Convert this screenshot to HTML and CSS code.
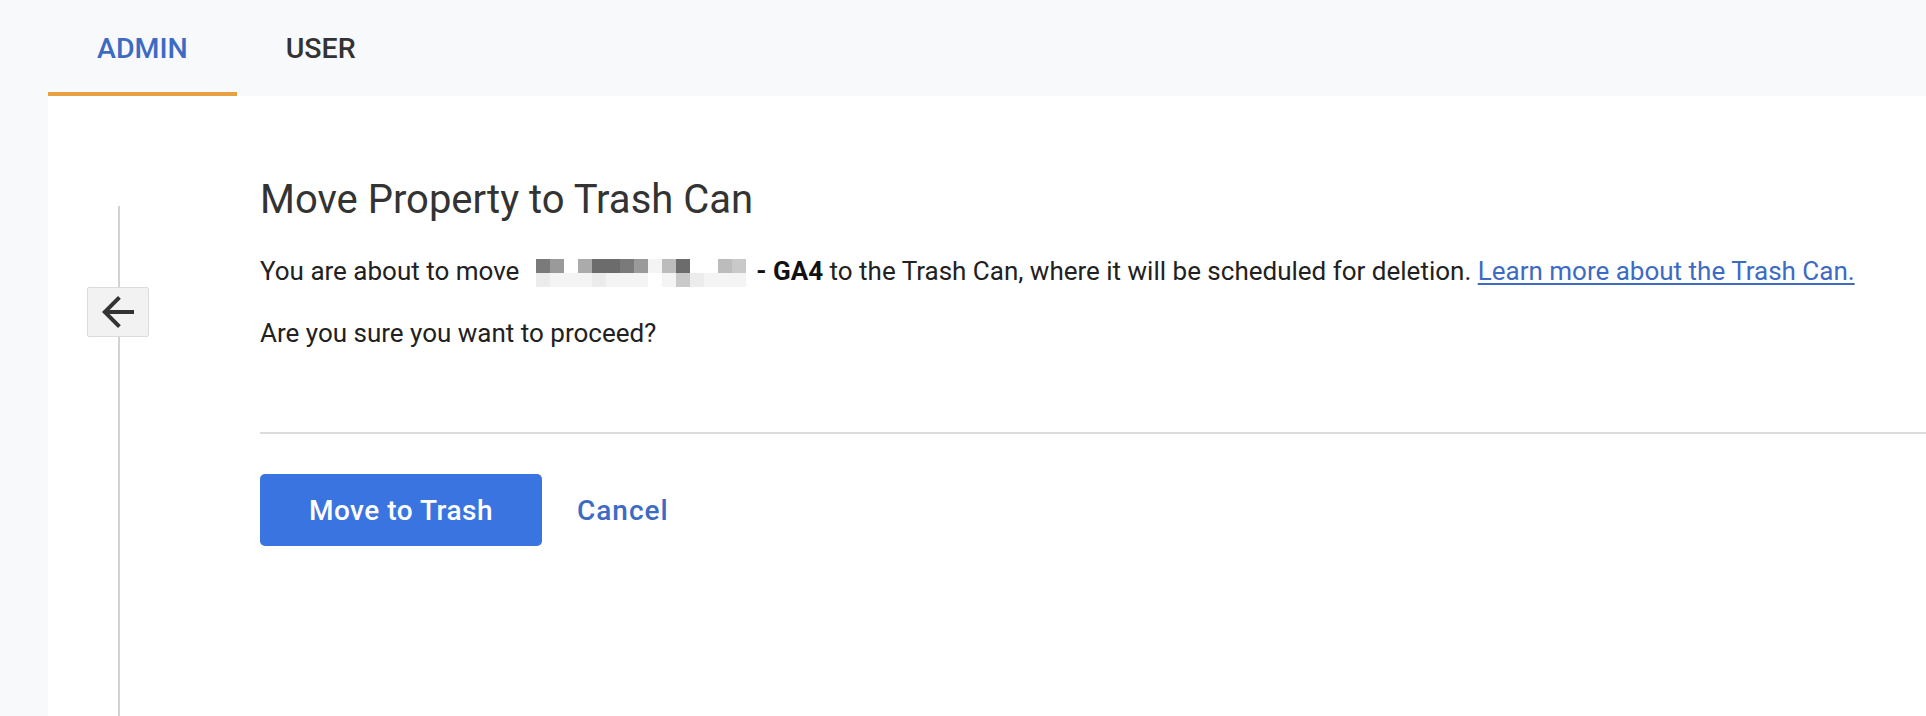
FILE: index.html
```html
<!DOCTYPE html>
<html lang="en">
<head>
<meta charset="utf-8">
<title>Move Property to Trash Can</title>
<link rel="stylesheet" href="styles.css">
</head>
<body>
<div class="page">
  <nav class="tabs">
    <div class="tab tab-active">ADMIN</div>
    <div class="tab">USER</div>
  </nav>
  <main class="panel">
    <div class="rail">
      <div class="rail-line rail-line-top"></div>
      <button class="back-btn" aria-label="Back">
        <svg viewBox="0 0 24 24" width="48" height="48"><path d="M20 11H7.83l5.59-5.59L12 4l-8 8 8 8 1.41-1.41L7.83 13H20v-2z"/></svg>
      </button>
      <div class="rail-line rail-line-bottom"></div>
    </div>
    <section class="content">
      <h1 class="title">Move Property to Trash Can</h1>
      <p class="text">You are about to move <span class="mosaic"><span class="mrow"><i class="s2"></i><i class="s3"></i><i class="s0"></i><i class="s4"></i><i class="s1"></i><i class="s1"></i><i class="s2"></i><i class="s3"></i><i class="s8"></i><i class="s5"></i><i class="s1"></i><i class="s0"></i><i class="s0"></i><i class="s5"></i><i class="s6"></i></span><span class="mrow"><i class="s7"></i><i class="s8"></i><i class="s8"></i><i class="s8"></i><i class="s7"></i><i class="s8"></i><i class="s8"></i><i class="s8"></i><i class="s0"></i><i class="s8"></i><i class="s6"></i><i class="s7"></i><i class="s8"></i><i class="s8"></i><i class="s8"></i></span></span> <b>- GA4</b> to the Trash Can, where it will be scheduled for deletion. <a class="link" href="#">Learn more about the Trash Can.</a></p>
      <p class="text text-second">Are you sure you want to proceed?</p>
      <hr class="divider">
      <div class="actions">
        <button class="btn-primary">Move to Trash</button>
        <button class="btn-text">Cancel</button>
      </div>
    </section>
  </main>
</div>
</body>
</html>
```

FILE: styles.css
```css
* { box-sizing: border-box; }

html, body {
  margin: 0;
  padding: 0;
  height: 100%;
}

body {
  background: #f8f9fa;
  font-family: Roboto, "Liberation Sans", Arial, sans-serif;
  color: #212121;
  overflow: hidden;
}

.page {
  display: flex;
  flex-direction: column;
  height: 716px;
  padding-left: 48px;
}

.tabs {
  display: flex;
  height: 96px;
  flex: none;
}

.tab {
  display: flex;
  align-items: center;
  height: 96px;
  padding: 4px 49px 0 49px;
  border-bottom: 4px solid transparent;
  font-size: 28.5px;
  font-weight: 500;
  color: #333333;
}

.tab-active {
  color: #3d6bc4;
  border-bottom-color: #e8a142;
}

.panel {
  flex: 1;
  display: flex;
  background: #ffffff;
  min-height: 0;
}

.rail {
  display: flex;
  flex-direction: column;
  align-items: center;
  width: 62px;
  margin-left: 39px;
  padding-top: 110px;
  flex: none;
}

.rail-line {
  width: 2px;
  margin-left: 2px;
  background: #d2d2d2;
}

.rail-line-top { height: 81px; }
.rail-line-bottom { flex: 1; }

.back-btn {
  display: flex;
  align-items: center;
  justify-content: center;
  width: 62px;
  height: 50px;
  padding: 0;
  background: #f2f2f2;
  border: 1px solid #dcdcdc;
  border-radius: 2px;
}

.back-btn svg { fill: #333333; display: block; }

.content {
  flex: 1;
  display: flex;
  flex-direction: column;
  align-items: flex-start;
  margin-left: 111px;
  padding-top: 80px;
}

.title {
  margin: 0;
  font-size: 40px;
  line-height: 48px;
  font-weight: 400;
  color: #333333;
}

.text {
  margin: 29px 0 0 0;
  font-size: 26px;
  line-height: 36px;
  color: #212121;
}

.text b { font-weight: 700; color: #111; }

.text-second { margin-top: 26px; }

.link {
  color: #3d6bc4;
  text-decoration: underline;
  text-decoration-thickness: 2px;
  text-underline-offset: 3px;
}

.mosaic {
  display: inline-block;
  overflow: hidden;
  vertical-align: -7px;
  margin-left: 10px;
  margin-right: 4px;
}

.mrow { display: flex; }

.mrow i {
  display: block;
  width: 14px;
  height: 14px;
}

.s0 { background: transparent; }
.s1 { background: #6c6c6c; }
.s2 { background: #7a7a7a; }
.s3 { background: #9a9a9a; }
.s4 { background: #ababab; }
.s5 { background: #bcbcbc; }
.s6 { background: #c9c9c9; }
.s7 { background: #ececec; }
.s8 { background: #f4f4f4; }

.divider {
  align-self: stretch;
  margin: 81px 0 0 0;
  height: 2px;
  border: none;
  background: #dcdcdc;
}

.actions {
  display: flex;
  align-items: center;
  margin-top: 40px;
}

.btn-primary {
  width: 282px;
  height: 72px;
  border: none;
  border-radius: 5px;
  background: #3a74e0;
  color: #ffffff;
  font-family: Roboto, "Liberation Sans", Arial, sans-serif;
  font-size: 28px;
  font-weight: 500;
  letter-spacing: 0.5px;
  padding: 0;
}

.btn-text {
  margin-left: 35px;
  padding: 0;
  border: none;
  background: transparent;
  color: #3d6bc4;
  font-family: Roboto, "Liberation Sans", Arial, sans-serif;
  font-size: 28px;
  font-weight: 500;
  letter-spacing: 1px;
}
```
